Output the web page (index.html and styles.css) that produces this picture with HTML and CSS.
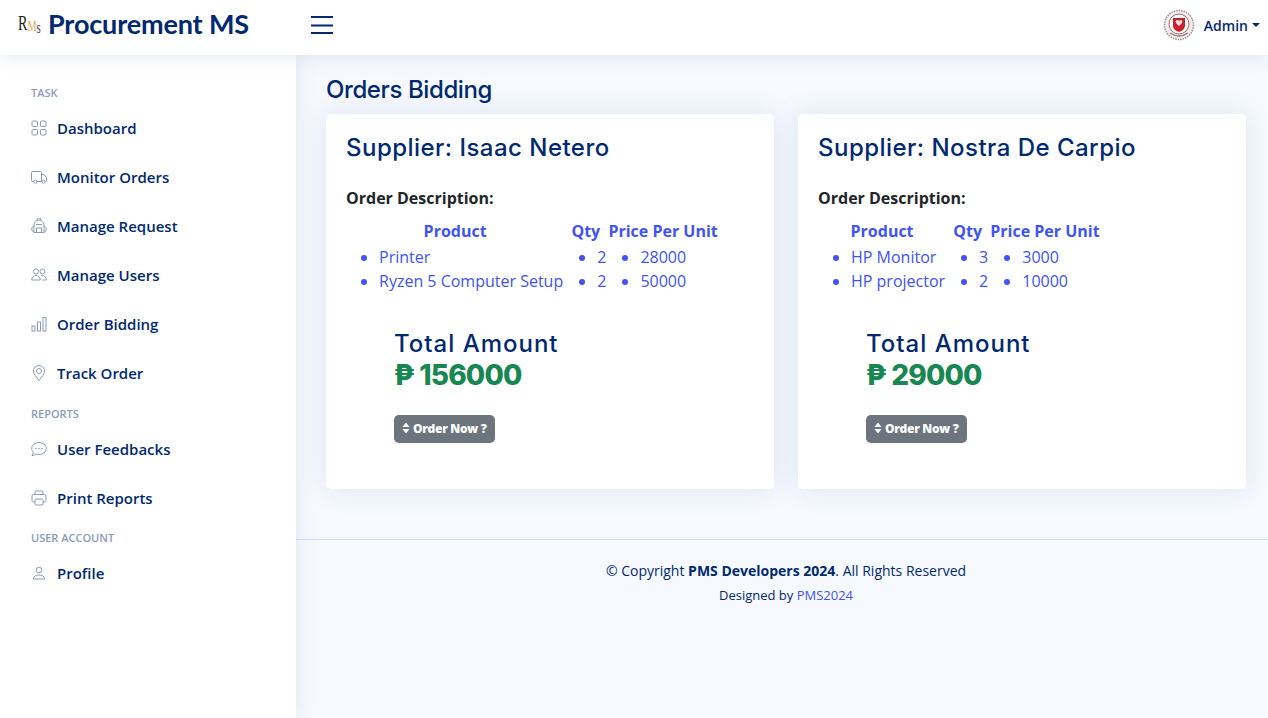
FILE: index.html
```html
<!DOCTYPE html>
<html lang="en">
<head>
<meta charset="utf-8">
<title>Orders Bidding</title>
<link rel="stylesheet" href="styles.css">
</head>
<body>
<header class="topbar">
  <div class="brand">
    <span class="logo-mark"><span class="lm-r">R</span><span class="lm-m">M</span><span class="lm-s">s</span></span>
    <span class="brand-name">Procurement MS</span>
  </div>
  <svg class="burger" width="22" height="18" viewBox="0 0 22 18"><path d="M0 1h22M0 9.500h22M0 17h22" stroke="#012970" stroke-width="2" fill="none"/></svg>
  <div class="user">
    <svg class="avatar" width="32" height="32" viewBox="0 0 32 32">
      <circle cx="16" cy="16" r="14.500" fill="#f3eeee" stroke="#9a8f90" stroke-width="1.500" stroke-dasharray="1.500 1"/>
      <circle cx="16" cy="15" r="10" fill="#fff" stroke="#a7686c" stroke-width="1"/>
      <path d="M10 9h12v7c0 4-3 6-6 7-3-1-6-3-6-7z" fill="#c8202c"/>
      <path d="M12.500 12c1.500-1.500 2.500-1 3.500 0 1-1 2-1.500 3.500 0 0 2-2 4-3.500 5-1.500-1-3.500-3-3.500-5z" fill="#f4dfe0"/>
      <path d="M7 24q9 6 18 0" stroke="#8b7f80" stroke-width="1.500" fill="none"/>
    </svg>
    <span class="user-name">Admin</span>
    <span class="caret"></span>
  </div>
</header>
<div class="shell">
  <aside class="sidebar">
    <div class="nav-heading first">Task</div>
    <a class="nav-item"><svg class="ico" viewBox="0 0 16 16"><rect x="1" y="1" width="5.500" height="5.500" rx="1"/><rect x="9.500" y="1" width="5.500" height="5.500" rx="1"/><rect x="1" y="9.500" width="5.500" height="5.500" rx="1"/><rect x="9.500" y="9.500" width="5.500" height="5.500" rx="1"/></svg>Dashboard</a>
    <a class="nav-item"><svg class="ico" viewBox="0 0 16 16"><path d="M3 12.500H1.500a1 1 0 0 1-1-1v-8a1 1 0 0 1 1-1h8a1 1 0 0 1 1 1v9H6M10.500 5.500h2.500l2.500 3v3a1 1 0 0 1-1 1H14M10.500 12.500h.5"/><circle cx="4.500" cy="12.800" r="1.500"/><circle cx="12.500" cy="12.800" r="1.500"/></svg>Monitor Orders</a>
    <a class="nav-item"><svg class="ico" viewBox="0 0 16 16"><path d="M3 14.500V7a5 5 0 0 1 10 0v7.500zM6 2.500V2a2 2 0 0 1 4 0v.5M3 8.500C1.500 8.500.8 9.500.8 11s.7 3 2.200 3M13 8.500c1.500 0 2.200 1 2.200 2.500s-.7 3-2.200 3M5.500 10h5v4.500h-5zM5 6.500h6"/></svg>Manage Request</a>
    <a class="nav-item"><svg class="ico" viewBox="0 0 16 16"><circle cx="5" cy="4.500" r="2.500"/><circle cx="11.500" cy="4.500" r="2.500"/><path d="M.7 13c0-3 2-4.500 4.300-4.500s4.300 1.500 4.300 4.500zM10 8.700c3-.7 5.300 1 5.300 4.300h-3.500"/></svg>Manage Users</a>
    <a class="nav-item"><svg class="ico" viewBox="0 0 16 16"><rect x="1" y="10" width="3" height="5"/><rect x="6.500" y="6" width="3" height="9"/><rect x="12" y="1.500" width="3" height="13.500"/></svg>Order Bidding</a>
    <a class="nav-item"><svg class="ico" viewBox="0 0 16 16"><path d="M8 15.500C5 11.500 2.500 9 2.500 6a5.500 5.500 0 0 1 11 0c0 3-2.500 5.500-5.500 9.500z"/><circle cx="8" cy="6" r="2.500"/></svg>Track Order</a>
    <div class="nav-heading">Reports</div>
    <a class="nav-item"><svg class="ico" viewBox="0 0 16 16"><path d="M8 1.500c4 0 7.300 2.600 7.300 6s-3.300 6-7.300 6c-1 0-2-.2-3-.5-1 .8-2.500 1.500-4 1.500.8-1 1.200-2.200 1.200-3C1.500 10.500.7 9 .7 7.500c0-3.400 3.300-6 7.300-6z"/><path class="dots" d="M5 7.500h.01M8 7.500h.01M11 7.500h.01"/></svg>User Feedbacks</a>
    <a class="nav-item"><svg class="ico" viewBox="0 0 16 16"><path d="M4 4.500V2a1 1 0 0 1 1-1h6a1 1 0 0 1 1 1v2.500M4 12H2.500a1.500 1.500 0 0 1-1.500-1.500V6a1.500 1.500 0 0 1 1.500-1.500h11A1.500 1.500 0 0 1 15 6v4.500a1.500 1.500 0 0 1-1.500 1.500H12"/><rect x="4" y="9" width="8" height="6" rx="1"/></svg>Print Reports</a>
    <div class="nav-heading tight">User Account</div>
    <a class="nav-item"><svg class="ico" viewBox="0 0 16 16"><circle cx="8" cy="5" r="2.800"/><path d="M2.500 14c0-3 2.500-4 5.500-4s5.500 1 5.500 4z"/></svg>Profile</a>
  </aside>
  <main class="main">
    <div class="content">
      <h1 class="page-title">Orders Bidding</h1>
      <div class="cards">
        <section class="card">
          <h2 class="supplier">Supplier: Isaac Netero</h2>
          <p class="desc">Order Description:</p>
          <table class="orders">
            <tr><th>Product</th><th>Qty</th><th>Price Per Unit</th></tr>
            <tr>
              <td><ul><li>Printer</li><li>Ryzen 5 Computer Setup</li></ul></td>
              <td class="qty"><ul><li>2</li><li>2</li></ul></td>
              <td><ul><li>28000</li><li>50000</li></ul></td>
            </tr>
          </table>
          <div class="total">
            <div class="total-label">Total Amount</div>
            <div class="total-value">₱ 156000</div>
            <button class="order-btn"><svg width="8" height="12" viewBox="0 0 8 12"><path d="M4 .5 7.500 5H.5zM4 11.500.5 7h7z" fill="#fff"/></svg>Order Now ?</button>
          </div>
        </section>
        <section class="card">
          <h2 class="supplier">Supplier: Nostra De Carpio</h2>
          <p class="desc">Order Description:</p>
          <table class="orders">
            <tr><th>Product</th><th>Qty</th><th>Price Per Unit</th></tr>
            <tr>
              <td><ul><li>HP Monitor</li><li>HP projector</li></ul></td>
              <td class="qty"><ul><li>3</li><li>2</li></ul></td>
              <td><ul><li>3000</li><li>10000</li></ul></td>
            </tr>
          </table>
          <div class="total">
            <div class="total-label">Total Amount</div>
            <div class="total-value">₱ 29000</div>
            <button class="order-btn"><svg width="8" height="12" viewBox="0 0 8 12"><path d="M4 .5 7.500 5H.5zM4 11.500.5 7h7z" fill="#fff"/></svg>Order Now ?</button>
          </div>
        </section>
      </div>
    </div>
    <footer class="footer">
      <div class="copyright">© Copyright <strong>PMS Developers 2024</strong>. All Rights Reserved</div>
      <div class="credits">Designed by <a class="credit-link">PMS2024</a></div>
    </footer>
  </main>
</div>
</body>
</html>
```
FILE: styles.css
```css
* { box-sizing: border-box; }
html, body { height: 100%; }
body {
  margin: 0;
  background: #f6f9ff;
  color: #444;
  font-family: "Open Sans", sans-serif;
  overflow: hidden;
}
.topbar {
  position: relative;
  z-index: 2;
  height: 55px;
  background: #fff;
  box-shadow: 0 2px 20px rgba(1, 41, 112, .1);
  display: flex;
  align-items: center;
  padding: 0 8px 5px 18px;
}
.brand { width: 293px; display: flex; align-items: center; gap: 8px; }
.logo-mark {
  width: 22px;
  height: 24px;
  display: flex;
  align-items: flex-start;
  font-family: "Liberation Serif", serif;
  line-height: 1;
  transform: scaleX(.68);
  transform-origin: left center;
}
.lm-r { font-size: 21px; color: #2b2118; }
.lm-m { font-size: 15px; color: #d9a860; margin-top: 6px; }
.lm-s { font-size: 16px; color: #44443f; margin-top: 7px; }
.brand-name {
  font-family: "Lato", sans-serif;
  font-size: 27px;
  font-weight: 700;
  line-height: 30px;
  color: #012970;
  letter-spacing: -.15px;
  margin-top: -2px;
}
.burger { display: block; }
.user { margin-left: auto; display: flex; align-items: center; }
.avatar { margin-right: 9px; }
.user-name { font-size: 14px; font-weight: 600; color: #012970; }
.caret {
  margin-left: 4px;
  border-top: 4px solid #012970;
  border-left: 4px solid transparent;
  border-right: 4px solid transparent;
}
.shell { display: flex; height: 663px; }
.sidebar {
  width: 296px;
  flex: none;
  background: #fff;
  box-shadow: 0 0 20px rgba(1, 41, 112, .1);
  padding: 31px 20px 0 31px;
  position: relative;
  z-index: 1;
}
.nav-heading {
  font-size: 11px;
  font-weight: 600;
  line-height: 14px;
  text-transform: uppercase;
  color: #899bbd;
  margin: -3px 0 16px;
}
.nav-heading.first { margin-top: 0; }
.nav-heading.tight { margin-top: -4px; }
.nav-item {
  display: flex;
  align-items: center;
  height: 49px;
  margin-top: -13px;
  margin-bottom: 13px;
  font-size: 15px;
  font-weight: 600;
  color: #012970;
  gap: 10px;
}
.ico {
  width: 16px;
  height: 16px;
  flex: none;
  fill: none;
  stroke: #899bbd;
  stroke-width: 1;
}
.dots { stroke-width: 1.600; stroke-linecap: round; }
.main { flex: 1; }
.content { padding: 20px 22px 50px 30px; border-bottom: 1px solid #cddfff; }
.page-title {
  margin: 0 0 9px;
  font-family: "Inter", sans-serif;
  font-size: 24px;
  line-height: 30px;
  font-weight: 500;
  letter-spacing: -.4px;
  color: #012970;
}
.cards { display: grid; grid-template-columns: 448px 448px; gap: 24px; }
.card {
  height: 375px;
  background: #fff;
  border-radius: 5px;
  box-shadow: 0 0 30px rgba(1, 41, 112, .1);
  padding: 20px;
}
.supplier {
  margin: 0 0 25px;
  font-family: "Inter", sans-serif;
  font-size: 24px;
  line-height: 27px;
  font-weight: 500;
  letter-spacing: .47px;
  color: #012970;
}
.desc {
  margin: 0 0 8px;
  font-size: 16px;
  line-height: 24px;
  font-weight: 700;
  color: #212529;
}
.orders { border-collapse: collapse; color: #4154f1; font-size: 16px; line-height: 24px; margin-left: 1px; }
.orders th { padding: 1px 0 2px; font-weight: 700; text-align: center; }
.orders td { padding: 0; }
.orders td.qty { padding: 0 2px; }
.orders ul { margin: 0; padding-left: 32px; }
.total { margin: 36px 0 0 48px; }
.total-label {
  font-family: "Inter", sans-serif;
  font-size: 24px;
  line-height: 30px;
  font-weight: 500;
  letter-spacing: 1px;
  color: #012970;
}
.total-value {
  font-family: "Inter", sans-serif;
  font-size: 28px;
  line-height: 32px;
  font-weight: 800;
  letter-spacing: -.8px;
  color: #198754;
}
.order-btn {
  margin-top: 24px;
  display: flex;
  align-items: center;
  gap: 3px;
  height: 28px;
  width: 101px;
  padding: 0 0 2px 8px;
  border: 0;
  border-radius: 5px;
  background: #6c757d;
  color: #fff;
  font-family: "Open Sans", sans-serif;
  font-size: 12px;
  font-weight: 800;
  letter-spacing: -.3px;
}
.footer { padding: 20px 0 0 8px; text-align: center; font-size: 14px; color: #012970; }
.copyright { line-height: 22px; }
.credits { margin-top: 2px; font-size: 13px; line-height: 22px; }
.credit-link { color: #4154f1; }
```
